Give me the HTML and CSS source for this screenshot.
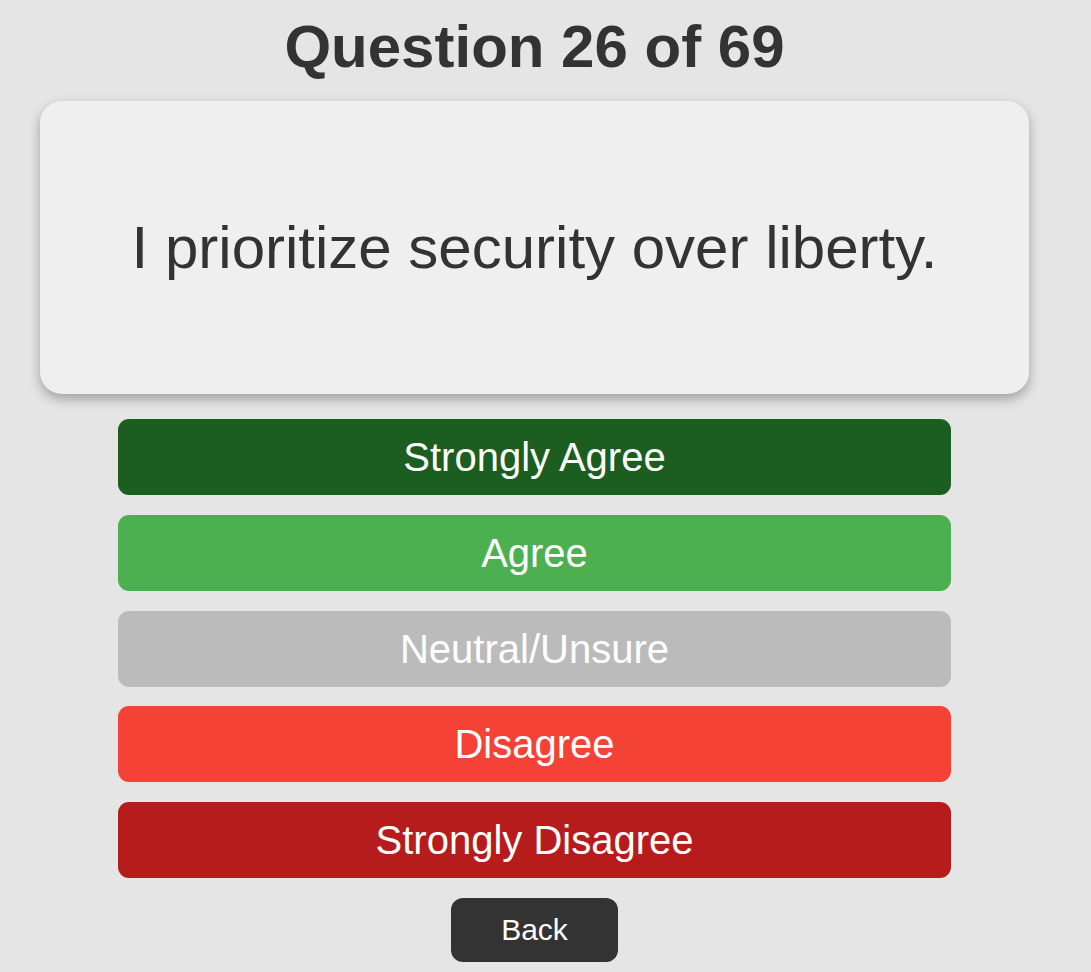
FILE: index.html
```html
<!DOCTYPE html>
<html lang="en">
<head>
  <meta charset="UTF-8">
  <meta name="viewport" content="width=device-width, initial-scale=1.0">
  <title>Quiz</title>
  <link rel="stylesheet" href="styles.css">
</head>
<body>
  <div class="quiz">
    <h1 class="titulo">Question 26 of 69</h1>

    <div class="cartao">
      <p class="pergunta">I prioritize security over liberty.</p>
    </div>

    <div class="respostas">
      <button class="resposta fortemente-sim">Strongly Agree</button>
      <button class="resposta sim">Agree</button>
      <button class="resposta neutro">Neutral/Unsure</button>
      <button class="resposta nao">Disagree</button>
      <button class="resposta fortemente-nao">Strongly Disagree</button>
    </div>

    <button class="voltar">Back</button>
  </div>
</body>
</html>
```

FILE: styles.css
```css
body {
  background-color: #e5e5e5;
  color: #333333;
  margin: 0;
  padding: 0;
  font-family: "Liberation Sans", Arial, Helvetica, sans-serif;
}

.quiz {
  width: 1069px;
  display: flex;
  flex-direction: column;
  align-items: center;
  padding-top: 13px;
}

.titulo {
  margin: 0;
  font-size: 60px;
  font-weight: bold;
  color: #333333;
  line-height: 67px;
}

.cartao {
  width: 989px;
  box-sizing: border-box;
  margin-top: 21px;
  padding: 113px 20px;
  background-color: #efefef;
  border-radius: 22px;
  box-shadow: 0 5px 12px rgba(0, 0, 0, 0.3);
  text-align: center;
}

.pergunta {
  margin: 0;
  font-size: 60px;
  line-height: 67px;
  color: #333333;
}

.respostas {
  width: 833px;
  margin-top: 25px;
  display: flex;
  flex-direction: column;
  gap: 19.75px;
}

.resposta {
  border: 0;
  padding: 15px 10px;
  border-radius: 11px;
  color: #ffffff;
  font-family: "Liberation Sans", Arial, Helvetica, sans-serif;
  font-size: 40px;
  line-height: 46px;
  cursor: pointer;
}

.fortemente-sim { background-color: #1b5e20; }
.sim { background-color: #4caf50; }
.neutro { background-color: #bbbbbb; }
.nao { background-color: #f44336; }
.fortemente-nao { background-color: #b71c1c; }

.voltar {
  margin-top: 19.5px;
  border: 0;
  padding: 15px 50px;
  border-radius: 12px;
  background-color: #333333;
  color: #ffffff;
  font-family: "Liberation Sans", Arial, Helvetica, sans-serif;
  font-size: 30px;
  line-height: 34.5px;
  cursor: pointer;
}
```
